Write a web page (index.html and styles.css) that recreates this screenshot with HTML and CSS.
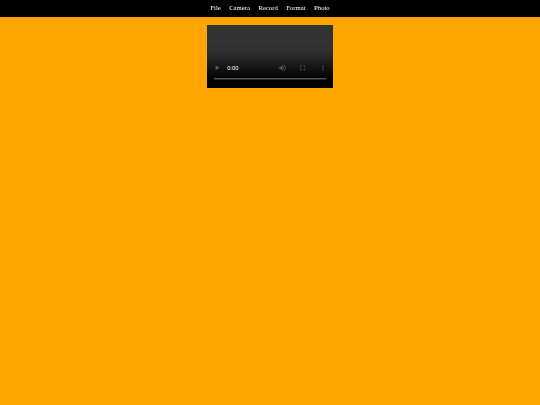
FILE: index.html
```html
<!DOCTYPE html>
<html lang="en">
<head>
    <meta charset="UTF-8">
    <meta name="viewport" content="width=device-width, initial-scale=1.0">
    <title>Camera</title>
    <link rel="stylesheet" href="styles.css">
</head>
<body>
    <nav class="menu-bar">
        <span class="menu-item">File</span>
        <span class="menu-item">Camera</span>
        <span class="menu-item">Record</span>
        <span class="menu-item">Format</span>
        <span class="menu-item">Photo</span>
    </nav>

    <main class="stage">
        <div class="preview-box">
            <video class="preview" controls></video>
        </div>
    </main>
</body>
</html>
```

FILE: styles.css
```css
html, body {
    height: 100%;
}

body {
    font-family: "Liberation Serif", serif;
    background-color: #ffa500;
    color: #fff;
    margin: 0;
    padding: 0;
}

.menu-bar {
    display: flex;
    justify-content: center;
    align-items: center;
    gap: 8.4px;
    box-sizing: border-box;
    height: 16.5px;
    padding-bottom: 1px;
    background-color: #000;
    font-size: 6.72px;
    filter: blur(0.35px);
}

.stage {
    display: flex;
    justify-content: center;
    padding-top: 8.5px;
}

.preview-box {
    width: 126px;
    height: 63px;
    filter: blur(0.35px);
}

.preview {
    display: block;
    width: 300px;
    height: 150px;
    background-color: #000;
    transform: scale(0.42);
    transform-origin: top left;
}
```
